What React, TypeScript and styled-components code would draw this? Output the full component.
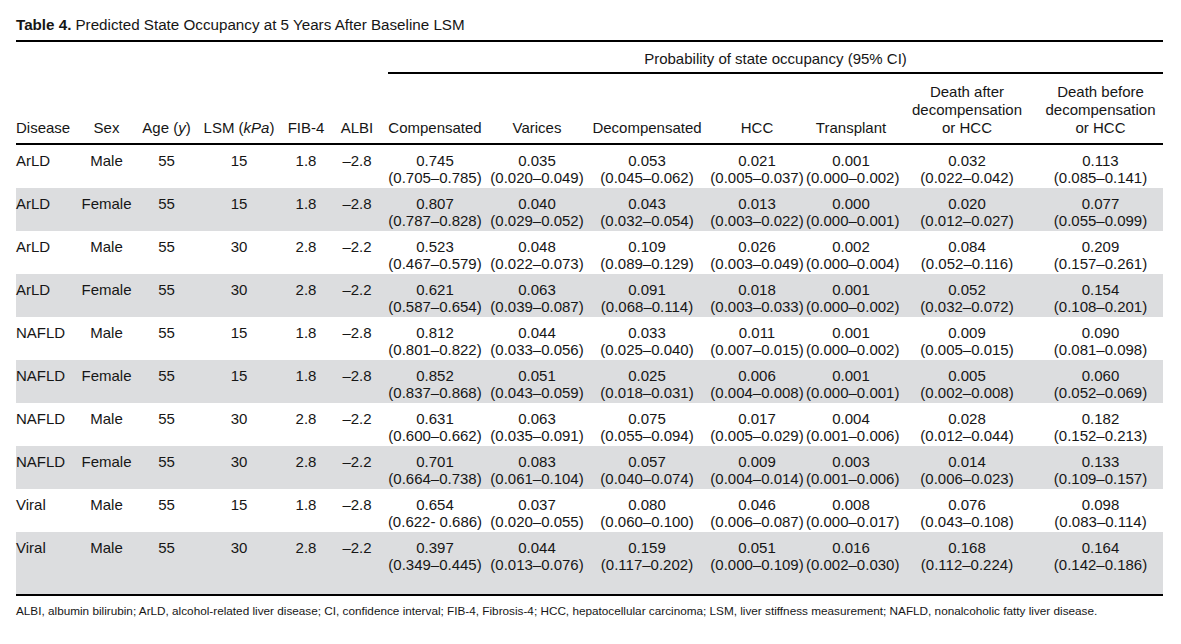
import React from "react";
import styled, { createGlobalStyle } from "styled-components";

const GlobalStyle = createGlobalStyle`
  html, body {
    margin: 0;
    padding: 0;
    background: #ffffff;
  }
  body {
    font-family: "Liberation Sans", Arial, Helvetica, sans-serif;
    color: #161616;
  }
`;

const Page = styled.div`
  width: 1147px;
  padding: 16px 18px 20px 16px;
`;

const Title = styled.div`
  font-size: 15.2px;
  line-height: 18px;
  margin-bottom: 6px;
  white-space: nowrap;
`;

const TitleLabel = styled.span`
  font-weight: 700;
  margin-right: 4px;
`;

const Table = styled.table`
  width: 1147px;
  table-layout: fixed;
  border-collapse: separate;
  border-spacing: 0;
  border-top: 2px solid #000;
  border-bottom: 2px solid #000;
  font-size: 15px;
`;

const Col = styled.col<{ $w: number }>`
  width: ${(p) => p.$w}px;
`;

const SpanHeadRow = styled.tr``;

const EmptyHead = styled.th`
  padding: 0;
`;

const SpanHead = styled.th`
  padding: 8px 0 0 0;
  font-weight: 400;
`;

const SpanRule = styled.div`
  margin-left: 6px;
  padding-bottom: 4px;
  line-height: 18px;
  text-align: center;
  border-bottom: 2px solid #000;
`;

const HeadCell = styled.th<{ $align?: "left" | "center" }>`
  font-weight: 400;
  line-height: 18px;
  padding: 9px 0 6px 0;
  vertical-align: bottom;
  text-align: ${(p) => p.$align ?? "center"};
  border-bottom: 2px solid #000;
  white-space: nowrap;
`;

const Row = styled.tr<{ $shade: boolean; $last: boolean }>`
  background: ${(p) => (p.$shade ? "#dcdddf" : "#ffffff")};
  & > td {
    padding-bottom: ${(p) => (p.$last ? "21px" : "2px")};
  }
`;

const Cell = styled.td<{ $align?: "left" | "center" }>`
  padding: 7px 0 2px 0;
  line-height: 17px;
  vertical-align: top;
  text-align: ${(p) => p.$align ?? "center"};
  white-space: nowrap;
`;

const Estimate = styled.div``;

const Interval = styled.div``;

const Footnote = styled.div`
  margin-top: 8px;
  font-size: 11.75px;
  line-height: 14px;
  white-space: nowrap;
`;

const widths = [62, 57, 63, 82, 52, 50, 106, 98, 122, 98, 90, 142, 125];

type Row = {
  disease: string;
  sex: string;
  age: string;
  lsm: string;
  fib: string;
  albi: string;
  values: [string, string][];
};

const rows: Row[] = [
  {
    disease: "ArLD", sex: "Male", age: "55", lsm: "15", fib: "1.8", albi: "–2.8",
    values: [
      ["0.745", "(0.705–0.785)"], ["0.035", "(0.020–0.049)"], ["0.053", "(0.045–0.062)"],
      ["0.021", "(0.005–0.037)"], ["0.001", "(0.000–0.002)"], ["0.032", "(0.022–0.042)"],
      ["0.113", "(0.085–0.141)"],
    ],
  },
  {
    disease: "ArLD", sex: "Female", age: "55", lsm: "15", fib: "1.8", albi: "–2.8",
    values: [
      ["0.807", "(0.787–0.828)"], ["0.040", "(0.029–0.052)"], ["0.043", "(0.032–0.054)"],
      ["0.013", "(0.003–0.022)"], ["0.000", "(0.000–0.001)"], ["0.020", "(0.012–0.027)"],
      ["0.077", "(0.055–0.099)"],
    ],
  },
  {
    disease: "ArLD", sex: "Male", age: "55", lsm: "30", fib: "2.8", albi: "–2.2",
    values: [
      ["0.523", "(0.467–0.579)"], ["0.048", "(0.022–0.073)"], ["0.109", "(0.089–0.129)"],
      ["0.026", "(0.003–0.049)"], ["0.002", "(0.000–0.004)"], ["0.084", "(0.052–0.116)"],
      ["0.209", "(0.157–0.261)"],
    ],
  },
  {
    disease: "ArLD", sex: "Female", age: "55", lsm: "30", fib: "2.8", albi: "–2.2",
    values: [
      ["0.621", "(0.587–0.654)"], ["0.063", "(0.039–0.087)"], ["0.091", "(0.068–0.114)"],
      ["0.018", "(0.003–0.033)"], ["0.001", "(0.000–0.002)"], ["0.052", "(0.032–0.072)"],
      ["0.154", "(0.108–0.201)"],
    ],
  },
  {
    disease: "NAFLD", sex: "Male", age: "55", lsm: "15", fib: "1.8", albi: "–2.8",
    values: [
      ["0.812", "(0.801–0.822)"], ["0.044", "(0.033–0.056)"], ["0.033", "(0.025–0.040)"],
      ["0.011", "(0.007–0.015)"], ["0.001", "(0.000–0.002)"], ["0.009", "(0.005–0.015)"],
      ["0.090", "(0.081–0.098)"],
    ],
  },
  {
    disease: "NAFLD", sex: "Female", age: "55", lsm: "15", fib: "1.8", albi: "–2.8",
    values: [
      ["0.852", "(0.837–0.868)"], ["0.051", "(0.043–0.059)"], ["0.025", "(0.018–0.031)"],
      ["0.006", "(0.004–0.008)"], ["0.001", "(0.000–0.001)"], ["0.005", "(0.002–0.008)"],
      ["0.060", "(0.052–0.069)"],
    ],
  },
  {
    disease: "NAFLD", sex: "Male", age: "55", lsm: "30", fib: "2.8", albi: "–2.2",
    values: [
      ["0.631", "(0.600–0.662)"], ["0.063", "(0.035–0.091)"], ["0.075", "(0.055–0.094)"],
      ["0.017", "(0.005–0.029)"], ["0.004", "(0.001–0.006)"], ["0.028", "(0.012–0.044)"],
      ["0.182", "(0.152–0.213)"],
    ],
  },
  {
    disease: "NAFLD", sex: "Female", age: "55", lsm: "30", fib: "2.8", albi: "–2.2",
    values: [
      ["0.701", "(0.664–0.738)"], ["0.083", "(0.061–0.104)"], ["0.057", "(0.040–0.074)"],
      ["0.009", "(0.004–0.014)"], ["0.003", "(0.001–0.006)"], ["0.014", "(0.006–0.023)"],
      ["0.133", "(0.109–0.157)"],
    ],
  },
  {
    disease: "Viral", sex: "Male", age: "55", lsm: "15", fib: "1.8", albi: "–2.8",
    values: [
      ["0.654", "(0.622- 0.686)"], ["0.037", "(0.020–0.055)"], ["0.080", "(0.060–0.100)"],
      ["0.046", "(0.006–0.087)"], ["0.008", "(0.000–0.017)"], ["0.076", "(0.043–0.108)"],
      ["0.098", "(0.083–0.114)"],
    ],
  },
  {
    disease: "Viral", sex: "Male", age: "55", lsm: "30", fib: "2.8", albi: "–2.2",
    values: [
      ["0.397", "(0.349–0.445)"], ["0.044", "(0.013–0.076)"], ["0.159", "(0.117–0.202)"],
      ["0.051", "(0.000–0.109)"], ["0.016", "(0.002–0.030)"], ["0.168", "(0.112–0.224)"],
      ["0.164", "(0.142–0.186)"],
    ],
  },
];

export default function App() {
  return (
    <>
      <GlobalStyle />
      <Page>
        <Title>
          <TitleLabel>Table 4.</TitleLabel>Predicted State Occupancy at 5 Years After Baseline LSM
        </Title>
        <Table>
          <colgroup>
            {widths.map((w, i) => (
              <Col key={i} $w={w} />
            ))}
          </colgroup>
          <thead>
            <SpanHeadRow>
              <EmptyHead colSpan={6} />
              <SpanHead colSpan={7}>
                <SpanRule>Probability of state occupancy (95% CI)</SpanRule>
              </SpanHead>
            </SpanHeadRow>
            <tr>
              <HeadCell $align="left">Disease</HeadCell>
              <HeadCell>Sex</HeadCell>
              <HeadCell>
                Age (<i>y</i>)
              </HeadCell>
              <HeadCell>
                LSM (<i>kPa</i>)
              </HeadCell>
              <HeadCell>FIB-4</HeadCell>
              <HeadCell>ALBI</HeadCell>
              <HeadCell>Compensated</HeadCell>
              <HeadCell>Varices</HeadCell>
              <HeadCell>Decompensated</HeadCell>
              <HeadCell>HCC</HeadCell>
              <HeadCell>Transplant</HeadCell>
              <HeadCell>
                Death after
                <br />
                decompensation
                <br />
                or HCC
              </HeadCell>
              <HeadCell>
                Death before
                <br />
                decompensation
                <br />
                or HCC
              </HeadCell>
            </tr>
          </thead>
          <tbody>
            {rows.map((r, i) => (
              <Row key={i} $shade={i % 2 === 1} $last={i === rows.length - 1}>
                <Cell $align="left">{r.disease}</Cell>
                <Cell>{r.sex}</Cell>
                <Cell>{r.age}</Cell>
                <Cell>{r.lsm}</Cell>
                <Cell>{r.fib}</Cell>
                <Cell>{r.albi}</Cell>
                {r.values.map(([est, ci], j) => (
                  <Cell key={j}>
                    <Estimate>{est}</Estimate>
                    <Interval>{ci}</Interval>
                  </Cell>
                ))}
              </Row>
            ))}
          </tbody>
        </Table>
        <Footnote>
          ALBI, albumin bilirubin; ArLD, alcohol-related liver disease; CI, confidence interval; FIB-4, Fibrosis-4; HCC, hepatocellular carcinoma; LSM, liver stiffness measurement; NAFLD, nonalcoholic fatty liver disease.
        </Footnote>
      </Page>
    </>
  );
}
